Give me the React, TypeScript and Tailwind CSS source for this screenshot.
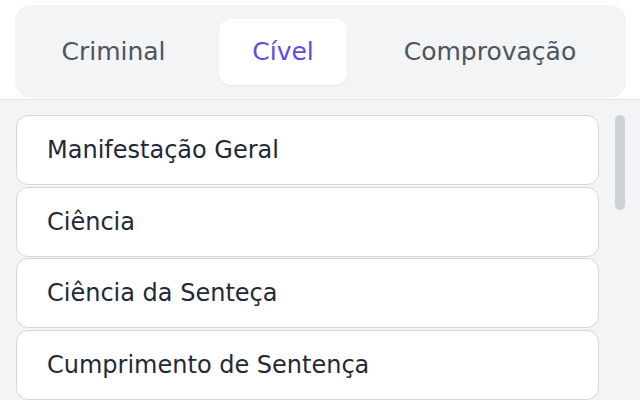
import React, { useState } from 'react';

const tabs = [
    { label: 'Criminal', width: 'w-[167px]' },
    { label: 'Cível', width: 'w-[128px]' },
    { label: 'Comprovação', width: 'w-[242px]' },
];

const items = [
    'Manifestação Geral',
    'Ciência',
    'Ciência da Senteça',
    'Cumprimento de Sentença',
];

const App: React.FC = () => {
    const [active, setActive] = useState('Cível');

    return (
        <div className="h-[400px] w-[640px] overflow-hidden flex flex-col bg-[#f3f4f6] font-['DejaVu_Sans',sans-serif]">
            {/* tab bar */}
            <div className="h-[100px] shrink-0 bg-white border-b border-[#e2e3e6] pl-[15px] pt-[5px]">
                <div className="w-[611px] h-[93px] rounded-2xl bg-[#f3f4f6] flex items-center gap-[22px] px-[15px]">
                    {tabs.map((tab) => (
                        <button
                            key={tab.label}
                            onClick={() => setActive(tab.label)}
                            className={
                                tab.label === active
                                    ? `${tab.width} h-[66px] shrink-0 rounded-xl bg-white shadow-[0_1px_2px_rgba(0,0,0,0.06)] text-[25px] text-[#5f4bea]`
                                    : `${tab.width} h-[66px] shrink-0 rounded-xl text-[25px] text-[#4b5563]`
                            }
                        >
                            {tab.label}
                        </button>
                    ))}
                </div>
            </div>

            {/* list */}
            <div className="flex-1 min-h-0 flex pt-[15px]">
                <div className="ml-4 w-[583px] flex flex-col gap-[1.7px]">
                    {items.map((item) => (
                        <div
                            key={item}
                            className="h-[70px] shrink-0 flex items-center pl-[30px] bg-white border border-[#d6d8dc] rounded-xl text-[24px] text-[#1f2937]"
                        >
                            {item}
                        </div>
                    ))}
                </div>
                <div className="ml-4 w-[10px]">
                    <div className="h-[95px] w-[10px] rounded-full bg-[#cdd0d5]" />
                </div>
            </div>
        </div>
    );
};

export default App;
